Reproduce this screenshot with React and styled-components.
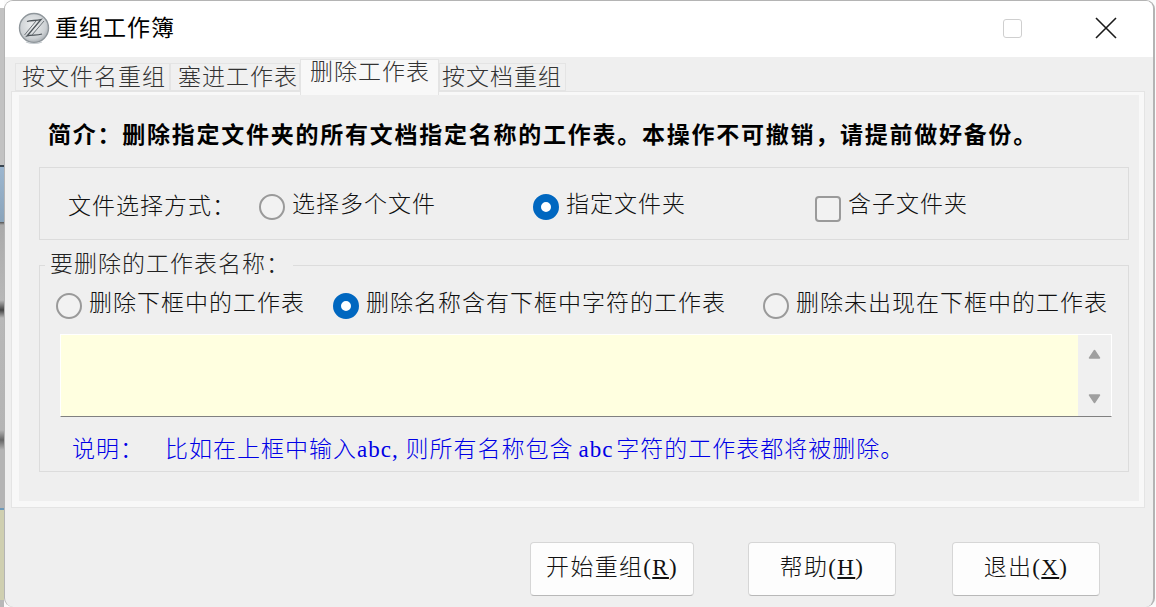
import React from "react";
import styled, { createGlobalStyle } from "styled-components";

const Global = createGlobalStyle`
  html, body { margin: 0; padding: 0; width: 1156px; height: 607px; overflow: hidden; background: #fbfbfb; }
  * { box-sizing: border-box; }
  body { font-family: "Liberation Serif", "Noto Sans CJK SC", serif; color: #111; font-size: 23px; font-weight: 300; }
`;

const Desktop = styled.div`
  display: flex;
  width: 1156px;
  height: 607px;
`;
const Backdrop = styled.div`
  width: 4px;
  flex: none;
  background: linear-gradient(180deg,
    #fff 0, #fff 8px, #c2c2c2 8px, #c2c2c2 165px, #3a4650 165px, #3a4650 167px,
    #9cb6cf 167px, #8aa4bb 222px, #555 222px, #aaa 225px, #b8b8b8 300px, #444 310px, #b8b8b8 318px,
    #b4b4b4 430px, #666 440px, #b4b4b4 450px, #b4b4b4 508px, #6b98b8 508px, #6b98b8 510px,
    #cfcfb0 510px, #cfcfb0 600px, #b8b8b8 600px);
`;
const Window = styled.div`
  width: 1151px;
  height: 607px;
  display: flex;
  flex-direction: column;
  background: #efefef;
  border: 1px solid #b4b4b4;
  border-width: 1px 2px 0 1px;
  border-radius: 9px;
  overflow: hidden;
`;
const TitleBar = styled.header`
  height: 56px;
  flex: none;
  background: #fff;
  display: flex;
  align-items: center;
  padding: 0 36px 0 13px;
`;
const Logo = styled.svg`
  width: 32px;
  height: 33px;
  flex: none;
  margin-top: -1px;
`;
const Title = styled.h1`
  margin: 0 0 0 5px;
  font-size: 23px;
  line-height: 32px;
  font-weight: 400;
  letter-spacing: 1px;
  color: #000;
  flex: 1;
`;
const MaxBtn = styled.span`
  width: 19px;
  height: 19px;
  border: 1.5px solid #cfcfcf;
  border-radius: 3px;
  margin-right: 73px;
  margin-top: -1px;
`;
const CloseIcon = styled.svg`
  width: 22px;
  height: 22px;
  flex: none;
  margin-top: -2px;
`;
const Content = styled.main`
  flex: 1;
  padding: 6px 8px 0 6px;
  display: flex;
  flex-direction: column;
`;
const TabStrip = styled.nav`
  height: 28px;
  display: flex;
  align-items: flex-end;
  padding-left: 4px;
  position: relative;
  z-index: 1;
`;
const Tab = styled.div`
  height: ${p => (p.$active ? "36px" : "28px")};
  width: ${p => p.$w}px;
  margin-bottom: ${p => (p.$active ? "-4px" : "0")};
  align-self: flex-start;
  margin-top: ${p => (p.$active ? "-4px" : "0")};
  border: 1px solid #e4e4e4;
  border-bottom: ${p => (p.$active ? "none" : "1px solid #e4e4e4")};
  background: ${p => (p.$active ? "#f8f8f8" : "#f0f0f0")};
  color: #333;
  line-height: ${p => (p.$active ? "26px" : "27px")};
  white-space: nowrap;
  padding-left: ${p => p.$pl}px;
  letter-spacing: 1px;
  font-size: 23px;
`;
const Pane = styled.section`
  height: 417px;
  border: 1px solid #e4e4e4;
  background: #f8f8f8;
  padding: 3px 5px 6px 7px;
`;
const Inner = styled.div`
  height: 100%;
  background: #efefef;
  padding: 0 10px 0 20px;
`;
const Intro = styled.p`
  margin: 0 0 0 9px;
  height: 72px;
  line-height: 82px;
  font-weight: 700;
  font-size: 23px;
  letter-spacing: 1.75px;
  color: #000;
  white-space: nowrap;
`;
const FileGroup = styled.div`
  height: 73px;
  width: 1090px;
  border: 1px solid #dcdcdc;
  display: flex;
  align-items: center;
  padding: 6px 0 0 28px;
`;
const FieldLabel = styled.span`
  width: 191px;
  flex: none;
  letter-spacing: 1px;
  white-space: nowrap;
  margin-top: -5px;
`;
const Option = styled.label`
  width: ${p => (p.$w ? `${p.$w}px` : "auto")};
  flex: none;
  display: flex;
  align-items: center;
  gap: 7px;
  white-space: nowrap;
  letter-spacing: 1px;
`;
const OptionText = styled.span`
  line-height: 26px;
  margin-top: -4px;
`;
const Radio = styled.span`
  width: 26px;
  height: 26px;
  flex: none;
  border-radius: 50%;
  background: ${p => (p.$on ? "#fff" : "#f2f2f2")};
  border: ${p => (p.$on ? "8px solid #0067c0" : "2px solid #9a9a9a")};
`;
const Check = styled.span`
  width: 26px;
  height: 26px;
  flex: none;
  border-radius: 4px;
  background: #f2f2f2;
  border: 2px solid #9a9a9a;
  margin-top: 4px;
`;
const NameGroup = styled.fieldset`
  margin: 13px 0 0;
  padding: 0 16px 0 16px;
  width: 1090px;
  height: 219px;
  border: 1px solid #dcdcdc;
  min-width: 0;
`;
const GroupLegend = styled.legend`
  margin-left: -11px;
  padding: 0 5px 0 5px;
  width: 248px;
  height: 24px;
  line-height: 24px;
  letter-spacing: 1px;
  white-space: nowrap;
  color: #222;
`;
const RadioRow = styled.div`
  display: flex;
  align-items: center;
  height: 26px;
  margin-top: 16px;
`;
const TextBox = styled.div`
  display: flex;
  height: 83px;
  width: 1052px;
  margin: 15px 0 0 4px;
  border: 1px solid #fff;
  border-width: 1px 1px 0 1px;
  border-bottom: 1px solid #808080;
`;
const Yellow = styled.div`
  flex: 1;
  background: #ffffe0;
`;
const Scroll = styled.div`
  width: 33px;
  flex: none;
  background: #f0f0f0;
  display: flex;
  flex-direction: column;
  align-items: center;
  justify-content: space-between;
  padding: 14px 0 12px;
`;
const Arrow = styled.svg`
  width: 13px;
  height: 11px;
`;
const Note = styled.p`
  margin: 19px 0 0 16px;
  color: #0000e6;
  line-height: 28px;
  letter-spacing: 1px;
  white-space: nowrap;
`;
const NoteHead = styled.span`
  display: inline-block;
  width: 93px;
`;
const Latin = styled.span`
  margin: 0 3px 0 5px;
`;
const Footer = styled.footer`
  display: flex;
  justify-content: flex-end;
  padding: 34px 45px 0 0;
`;
const Button = styled.button`
  width: ${p => p.$w}px;
  height: 54px;
  margin-left: ${p => p.$ml}px;
  background: #fdfdfd;
  border: 1px solid #d6d6d6;
  border-bottom-color: #b8b8b8;
  border-radius: 4px;
  font: inherit;
  color: #111;
  letter-spacing: 1.3px;
  padding: 0 0 9px;
  white-space: nowrap;
`;

function Up() {
  return (
    <Arrow viewBox="0 0 13 11">
      <path d="M6.5 1.5 L11.5 9 H1.5 Z" fill="#a0a0a0" stroke="#a0a0a0" strokeWidth="1.5" strokeLinejoin="round" />
    </Arrow>
  );
}
function Down() {
  return (
    <Arrow viewBox="0 0 13 11">
      <path d="M6.5 9.5 L11.5 2 H1.5 Z" fill="#a0a0a0" stroke="#a0a0a0" strokeWidth="1.5" strokeLinejoin="round" />
    </Arrow>
  );
}

export default function App() {
  return (
    <Desktop>
      <Global />
      <Backdrop />
      <Window>
        <TitleBar>
          <Logo viewBox="0 0 32 33">
            <defs>
              <radialGradient id="disc" cx="45%" cy="40%" r="65%">
                <stop offset="0" stopColor="#eceeef" />
                <stop offset="0.7" stopColor="#cdd1d4" />
                <stop offset="1" stopColor="#a3a9ae" />
              </radialGradient>
            </defs>
            <circle cx="16" cy="16" r="14.5" fill="url(#disc)" stroke="#8f969b" strokeWidth="1.4" />
            <path d="M9 9.5 C13 8 18 9 23 7.5 L9 24 C14 22.5 19 24 24 22" fill="none" stroke="#4e555a" strokeWidth="1.3" />
            <path d="M18 9 L6.5 23" fill="none" stroke="#6c7378" strokeWidth="1" />
            <path d="M26 9 L14 23" fill="none" stroke="#6c7378" strokeWidth="1" />
            <path d="M8 30 Q16 33 24 30" fill="none" stroke="#c5cbcf" strokeWidth="1.2" />
          </Logo>
          <Title>重组工作簿</Title>
          <MaxBtn />
          <CloseIcon viewBox="0 0 22 22">
            <path d="M1 1 L21 21 M21 1 L1 21" stroke="#1a1a1a" strokeWidth="1.6" />
          </CloseIcon>
        </TitleBar>
        <Content>
          <TabStrip>
            <Tab $w={155} $pl={6}>按文件名重组</Tab>
            <Tab $w={130} $pl={7}>塞进工作表</Tab>
            <Tab $w={139} $pl={9} $active>删除工作表</Tab>
            <Tab $w={127} $pl={2}>按文档重组</Tab>
          </TabStrip>
          <Pane>
            <Inner>
              <Intro>简介：删除指定文件夹的所有文档指定名称的工作表。本操作不可撤销，请提前做好备份。</Intro>
              <FileGroup>
                <FieldLabel>文件选择方式：</FieldLabel>
                <Option $w={274}><Radio /><OptionText>选择多个文件</OptionText></Option>
                <Option $w={282}><Radio $on /><OptionText>指定文件夹</OptionText></Option>
                <Option><Check /><OptionText>含子文件夹</OptionText></Option>
              </FileGroup>
              <NameGroup>
                <GroupLegend>要删除的工作表名称：</GroupLegend>
                <RadioRow>
                  <Option $w={277}><Radio /><OptionText>删除下框中的工作表</OptionText></Option>
                  <Option $w={430}><Radio $on /><OptionText>删除名称含有下框中字符的工作表</OptionText></Option>
                  <Option><Radio /><OptionText>删除未出现在下框中的工作表</OptionText></Option>
                </RadioRow>
                <TextBox>
                  <Yellow />
                  <Scroll><Up /><Down /></Scroll>
                </TextBox>
                <Note><NoteHead>说明：</NoteHead>比如在上框中输入abc, 则所有名称包含<Latin>abc</Latin>字符的工作表都将被删除。</Note>
              </NameGroup>
            </Inner>
          </Pane>
          <Footer>
            <Button $w={164} $ml={0}>开始重组(<u>R</u>)</Button>
            <Button $w={148} $ml={54}>帮助(<u>H</u>)</Button>
            <Button $w={148} $ml={56}>退出(<u>X</u>)</Button>
          </Footer>
        </Content>
      </Window>
    </Desktop>
  );
}
